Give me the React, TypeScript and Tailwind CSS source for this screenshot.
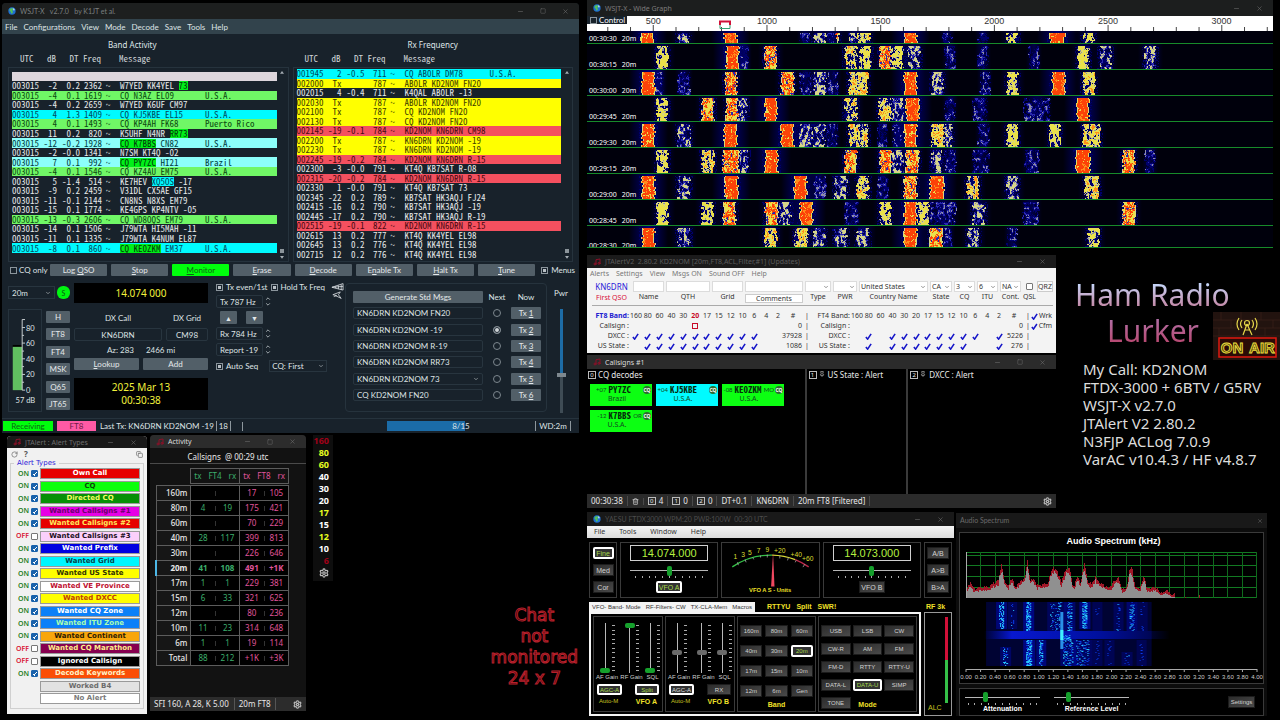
import React from 'react';
import { ChevronDown, Copy, Minus, Music, Pin, RotateCw, Settings, Square, Trash2, X } from 'lucide-react';
import { clsx } from 'clsx';

const UI = "font-['Noto_Sans',sans-serif]";
const QT = "font-['Lato',sans-serif]";
const MONO = "font-['Noto_Sans_Mono_CJK_SC','Liberation_Mono',monospace]";
const NARROW = "font-['Liberation_Sans_Narrow','Liberation_Sans',sans-serif]";

// small deterministic generator so the noise is stable between renders
function seeded(seed: number) {
  let s = seed;
  return () => {
    s = (s + 0x6d2b79f5) | 0;
    let t = Math.imul(s ^ (s >>> 15), 1 | s);
    t = (t + Math.imul(t ^ (t >>> 7), 61 | t)) ^ t;
    return ((t ^ (t >>> 14)) >>> 0) / 4294967296;
  };
}

/* ---------- shared bits ---------- */

interface TitleBarProps {
  title: string;
  icon: React.ReactNode;
  className?: string;
  maximize?: boolean;
}

const TitleBar: React.FC<TitleBarProps> = ({ title, icon, className, maximize = true }) => (
  <header className={clsx('flex items-center gap-1 px-1.5 text-[7px] leading-none', className)}>
    {icon}
    <h2 className="flex-1 whitespace-pre">{title}</h2>
    <div className="flex items-center gap-4 pr-1 text-[#6a6a6a]">
      <button aria-label="Minimize"><Minus size={7} /></button>
      {maximize && <button aria-label="Maximize"><Square size={6} /></button>}
      <button aria-label="Close"><X size={7} /></button>
    </div>
  </header>
);

const Globe = () => (
  <svg viewBox="0 0 12 12" className="size-[8px] shrink-0">
    <circle cx="6" cy="6" r="5.5" fill="#1f6fd0" />
    <path d="M3 2.5 6 1.5 8 3 6.5 5.5 7.5 8 5.5 10.5 4 7 2 5Z" fill="#53c05a" />
    <path d="M7 1.5 10 3.5 9 6 8 4Z" fill="#cfe9ff" />
  </svg>
);

const Note = () => <Music size={8} className="shrink-0 text-[#8c1028]" strokeWidth={3} />;

interface ComboProps {
  label: string;
  value: string;
  className?: string;
}

const Combo: React.FC<ComboProps> = ({ label, value, className }) => (
  <span className={clsx('flex items-center', className)}>
    <select aria-label={label} className="min-w-0 flex-1 appearance-none bg-transparent outline-none">
      <option>{value}</option>
    </select>
    <ChevronDown size={6} className="pointer-events-none shrink-0" />
  </span>
);

/* ---------- WSJT-X main window ---------- */

type Decode = [utc: string, db: string, dt: string, freq: string, msg: string, country?: string, row?: string, mark?: string];

const green = 'bg-[#70f766] text-[#0b4a10]';
const cyan = 'bg-[#00fbff] text-[#004a60]';
const pale = 'bg-[#8cfffa] text-[#003a40]';
const yellow = 'bg-[#ffff00] text-[#3d3d00]';
const red = 'bg-[#f4505f] text-[#4a0810]';
const lime = 'bg-[#00f018] text-[#003808]';

// the part of a message between bars is drawn on its own highlight
const band: Decode[] = [
  ['003015', '-2', '0.2', '2362', 'W7YED KK4YEL |73|', '', '', lime],
  ['003015', '-4', '0.1', '1619', 'CQ N3AZ EL09', 'U.S.A.', green],
  ['003015', '-4', '0.2', '2659', 'W7YED K6UF CM97'],
  ['003015', '4', '1.3', '1409', 'CQ KJ5KBE EL15', 'U.S.A.', cyan],
  ['003015', '4', '0.1', '1493', 'CQ KP4AH FK68', 'Puerto Rico', green],
  ['003015', '11', '0.2', '820', 'K5UHF N4NR |RR73|', '', '', lime],
  ['003015', '-12', '-0.2', '1928', '|CQ K7BBS| CN82', 'U.S.A.', pale, lime],
  ['003015', '-2', '-0.0', '1341', 'N7SM KT4Q -02'],
  ['003015', '7', '0.1', '992', '|CQ PY7ZC| HI21', 'Brazil', pale, lime],
  ['003015', '-4', '0.1', '1546', 'CQ KZ4AU EM75', 'U.S.A.', green],
  ['003015', '5', '-1.4', '514', 'KE7HEV |XQ5OS| -17', '', '', cyan],
  ['003015', '-9', '0.2', '2459', 'V31DL CX5AE GF15'],
  ['003015', '-11', '-0.1', '2144', 'CN8NS N8XS EM79'],
  ['003015', '-15', '0.1', '1774', 'KE4GPS KP4NTV -05'],
  ['003015', '-13', '-0.3', '2606', 'CQ WD8OQS EM79', 'U.S.A.', green],
  ['003015', '-14', '0.1', '1506', 'J79WTA HI5MAH -11'],
  ['003015', '-11', '0.1', '1335', 'J79WTA K4NUM EL87'],
  ['003015', '-8', '0.1', '860', '|CQ KE0ZKM| EM37', 'U.S.A.', cyan, lime],
];

const rx: Decode[] = [
  ['001945', '2', '-0.5', '711', 'CQ AB0LR DM78', 'U.S.A.', cyan],
  ['002000', 'Tx', '', '787', 'AB0LR KD2NOM FN20', '', yellow],
  ['002015', '4', '-0.4', '711', 'K4QAL AB0LR -13'],
  ['002030', 'Tx', '', '787', 'AB0LR KD2NOM FN20', '', yellow],
  ['002100', 'Tx', '', '787', 'CQ KD2NOM FN20', '', yellow],
  ['002130', 'Tx', '', '787', 'CQ KD2NOM FN20', '', yellow],
  ['002145', '-19', '-0.1', '784', 'KD2NOM KN6DRN CM98', '', red],
  ['002200', 'Tx', '', '787', 'KN6DRN KD2NOM -19', '', yellow],
  ['002230', 'Tx', '', '787', 'KN6DRN KD2NOM -19', '', yellow],
  ['002245', '-19', '-0.2', '784', 'KD2NOM KN6DRN R-15', '', red],
  ['002300', '-3', '-0.0', '791', 'KT4Q KB7SAT R-08'],
  ['002315', '-20', '-0.2', '784', 'KD2NOM KN6DRN R-15', '', red],
  ['002330', '1', '-0.0', '791', 'KT4Q KB7SAT 73'],
  ['002345', '-22', '0.2', '789', 'KB7SAT HK3AQJ FJ24'],
  ['002415', '-16', '0.2', '790', 'KB7SAT HK3AQJ -19'],
  ['002445', '-17', '0.2', '790', 'KB7SAT HK3AQJ R-19'],
  ['002515', '-19', '-0.1', '822', 'KD2NOM KN6DRN R-15', '', red],
  ['002615', '13', '0.2', '777', 'KT4Q KK4YEL EL98'],
  ['002645', '13', '0.2', '776', 'KT4Q KK4YEL EL98'],
  ['002715', '12', '0.2', '776', 'KT4Q KK4YEL EL98'],
];

interface DecodeTableProps {
  title: string;
  rows: Decode[];
  divider?: boolean;
}

const DecodeTable: React.FC<DecodeTableProps> = ({ title, rows, divider }) => (
  <section className="min-w-0 flex-1">
    <h3 className={clsx('text-center text-[8px] leading-[12px] text-[#dfe5e8]', UI, divider && 'pr-8')}>{title}</h3>
    <div className={clsx('flex h-[16px] items-center pl-[3px] text-[9px] whitespace-pre text-[#cfd5d8]', MONO)}>
      {'  UTC   dB   DT Freq    Message'}
    </div>
    <div className="flex h-[195px] border border-[#26333d] pt-px pl-[3px]">
      <div className={clsx('min-w-0 flex-1', divider && 'pt-[3px]')}>
        {divider && <div className="h-[9px] bg-[#ddd6dc]" />}
        <table className={clsx('w-full table-fixed border-collapse text-[9px] leading-[9px] font-medium text-[#e6e9ea]', MONO, divider ? 'h-[172px]' : 'h-[190px]')}>
          <colgroup>
            <col className="w-[27px]" />
            <col className="w-[18px]" />
            <col className="w-[23px]" />
            <col className="w-[22px]" />
            <col className="w-[18px]" />
            <col className="w-[85px]" />
            <col />
          </colgroup>
          <tbody>
            {rows.map(([utc, db, dt, freq, msg, country, row, mark], i) => {
              const [before, marked, after] = msg.split('|');
              return (
                <tr key={i} className={row}>
                  <td className="p-0">{utc}</td>
                  <td className="p-0 text-right">{db}</td>
                  <td className="p-0 text-right">{dt}</td>
                  <td className="p-0 text-right">{freq}</td>
                  <td className="p-0 pl-1">~</td>
                  <td className="p-0 whitespace-pre">
                    {before}
                    {marked && <span className={clsx('inline-block h-[9px]', mark)}>{marked}</span>}
                    {after}
                  </td>
                  <td className="p-0 whitespace-pre">{country}</td>
                </tr>
              );
            })}
          </tbody>
        </table>
      </div>
      <div className="flex w-[11px] flex-col items-center justify-between py-[2px] text-[#a5adb3]">
        <svg viewBox="0 0 6 4" className="w-[4px]"><path d="M0 4 3 0 6 4Z" fill="currentColor" /></svg>
        <div className="flex flex-col items-center gap-[3px]">
          <span className="size-[4px] bg-[#8b949a]" />
          <svg viewBox="0 0 6 4" className="w-[4px]"><path d="M0 0 3 4 6 0Z" fill="currentColor" /></svg>
        </div>
      </div>
    </div>
  </section>
);

const qtCheck =
  'size-[7px] shrink-0 appearance-none border border-[#8b959c] checked:bg-[#b9c0c5] checked:shadow-[inset_0_0_0_1px_#19232d]';
const qtButton = 'bg-[#525f68] text-[#e4e8ea] text-center rounded-[1px]';
const qtBox = 'rounded-[2px] border border-[#28353f] bg-transparent px-[3px] text-[#dfe3e5] outline-none';

interface KeyedProps {
  text: string;
}

// underlines the character that follows an ampersand
const Keyed: React.FC<KeyedProps> = ({ text }) => {
  const at = text.indexOf('&');
  if (at < 0) return <>{text}</>;
  return (
    <>
      {text.slice(0, at)}
      <u>{text[at + 1]}</u>
      {text.slice(at + 2)}
    </>
  );
};

const mainButtons = ['Log &QSO', '&Stop', '&Monitor', '&Erase', '&Decode', 'E&nable Tx', '&Halt Tx', '&Tune'];
const modes = ['H', 'FT8', 'FT4', 'MSK', 'Q65', 'JT65'];
const messages = ['KN6DRN KD2NOM FN20', 'KN6DRN KD2NOM -19', 'KN6DRN KD2NOM R-19', 'KN6DRN KD2NOM RR73', 'KN6DRN KD2NOM 73', 'CQ KD2NOM FN20'];

const LevelMeter = () => (
  <svg viewBox="0 0 34 103" className="h-[103px] w-[34px] shrink-0 border border-[#26333d]">
    <rect x="4" y="35" width="10" height="3" fill="#000" />
    <rect x="4" y="37" width="10" height="46" fill="#61c060" />
    <path d="M17 8H14V83H17M14 16.5H17M14 24.8H16M14 33H17M14 41.5H16M14 49.7H17M14 58H16M14 66.3H17M14 74.6H16" fill="none" stroke="#cfd5d8" />
    <g fill="#dfe3e5" fontSize="8" fontFamily="Lato">
      <text x="18" y="20">80</text>
      <text x="18" y="36">60</text>
      <text x="18" y="53">40</text>
      <text x="18" y="69">20</text>
      <text x="18" y="86">0</text>
      <text x="7" y="97">57 dB</text>
    </g>
  </svg>
);

const Horns = () => (
  <svg viewBox="0 0 14 18" className="h-[18px] w-[13px]" fill="none" stroke="#d5dadd" strokeWidth=".900">
    <path d="M1 5 13 1V8L1 5 13 4M5 4V6M8 3V7M11 2V8M10 10 2 13 6 14 3 15M10 10 8 13 11 17M5 14 11 17" />
  </svg>
);

const Spin = () => (
  <svg viewBox="0 0 6 12" className="ml-[2px] h-[11px] w-[6px] shrink-0" fill="none" stroke="#aab2b7">
    <path d="M1 4 3 2 5 4M1 8 3 10 5 8" />
  </svg>
);

const NumberField: React.FC<{ label: string; value: string }> = ({ label, value }) => (
  <div className="mt-[3px] flex h-[13px] items-center">
    <input aria-label={label} defaultValue={value} className={clsx(qtBox, 'h-[13px] w-[47px]')} />
    <Spin />
  </div>
);

const WsjtWindow = () => (
  <section className={clsx('mt-[3px] mr-1.5 ml-0.5 rounded-t bg-[#18222b] text-[8px] leading-[10px] text-[#dfe3e5]', QT)}>
    <TitleBar title="WSJT-X   v2.7.0   by K1JT et al." icon={<Globe />} className="h-[16px] rounded-t bg-[#1d1f1f] text-[#7b7f80]" />
    <nav className="flex h-[15px] items-center gap-[6px] bg-[#32434c] px-[3px]">
      {['File', 'Configurations', 'View', 'Mode', 'Decode', 'Save', 'Tools', 'Help'].map((m) => (
        <button key={m}>{m}</button>
      ))}
    </nav>

    <div className="flex gap-1 px-1.5 pt-[5px]">
      <DecodeTable title="Band Activity" rows={band} divider />
      <DecodeTable title="Rx Frequency" rows={rx} />
    </div>

    <div className="mt-[2px] flex items-center gap-1 pr-1 pl-2">
      <label className="flex w-[36px] items-center gap-[2px] whitespace-nowrap">
        <input type="checkbox" className={qtCheck} /> CQ only
      </label>
      {mainButtons.map((b) => (
        <button key={b} className={clsx(b === '&Monitor' ? 'rounded-[1px] bg-[#00ff0c] text-[#0d6614]' : qtButton, 'h-[12px] flex-1')}>
          <Keyed text={b} />
        </button>
      ))}
      <label className="ml-0.5 flex items-center gap-[3px]">
        <input type="checkbox" defaultChecked className={qtCheck} /> Menus
      </label>
    </div>

    <div className="flex h-[142px] gap-1 pt-[6px] pr-[3px] pl-1.5">
      <div className="flex w-[62px] shrink-0 flex-col gap-[10px] pt-[4px]">
        <div className="flex items-center gap-[2px]">
          <Combo label="Band" value="20m" className="h-[13px] w-[47px] border border-[#28353f] px-[3px]" />
          <button className="size-[13px] rounded-[6px] bg-[#00f510] text-[7px] text-[#0a5a10]">S</button>
        </div>
        <div className="flex gap-[4px]">
          <LevelMeter />
          <div className="flex flex-1 flex-col justify-between py-[2px]">
            {modes.map((m) => (
              <button key={m} className={clsx(qtButton, 'h-[12px] text-[#c6cdd2]')}>{m}</button>
            ))}
          </div>
        </div>
      </div>

      <div className="flex w-[134px] shrink-0 flex-col pt-px">
        <output className={clsx('h-[20px] bg-black text-center text-[10px] leading-[20px] text-[#f2f23c]', UI)}>14.074 000</output>
        <div className="mt-[10px] grid grid-cols-[88px_42px] gap-x-1 text-center">
          <label htmlFor="dxcall">DX Call</label>
          <label htmlFor="dxgrid">DX Grid</label>
          <input id="dxcall" defaultValue="KN6DRN" className={clsx(qtBox, 'mt-[5px] h-[13px] min-w-0 text-center')} />
          <input id="dxgrid" defaultValue="CM98" className={clsx(qtBox, 'mt-[5px] h-[13px] min-w-0 text-center')} />
        </div>
        <p className="mt-[4px] flex justify-center gap-3">
          <span>Az: 283</span>
          <span>2466 mi</span>
        </p>
        <div className="mt-[3px] grid grid-cols-2 gap-1">
          <button className={clsx(qtButton, 'h-[12px]')}><Keyed text="&Lookup" /></button>
          <button className={clsx(qtButton, 'h-[12px]')}>Add</button>
        </div>
        <div className={clsx('mt-[8px] h-[32px] bg-black pt-[3px] text-center text-[10px] leading-[13px] text-[#f2f23c]', UI)}>
          2025 Mar 13<br />00:30:38
        </div>
      </div>

      <div className="flex min-w-0 flex-1 flex-col pl-[4px]">
        <div className="flex items-start gap-1 whitespace-nowrap">
          <label className="flex items-center gap-[3px]"><input type="checkbox" defaultChecked className={qtCheck} />Tx even/1st</label>
          <label className="flex items-center gap-[2px]"><input type="checkbox" defaultChecked className={qtCheck} />Hold Tx Freq</label>
        </div>
        <NumberField label="Tx frequency" value="Tx 787 Hz" />
        <div className="mt-[3px] flex gap-[9px] pl-1 text-[7px]">
          <button className={clsx(qtButton, 'h-[13px] w-[17px]')}>▲</button>
          <button className={clsx(qtButton, 'h-[13px] w-[17px]')}>▼</button>
        </div>
        <NumberField label="Rx frequency" value="Rx 784 Hz" />
        <NumberField label="Report" value="Report -19" />
        <div className="mt-[4px] flex items-center gap-[11px] whitespace-nowrap">
          <label className="flex items-center gap-[3px]"><input type="checkbox" defaultChecked className={qtCheck} />Auto Seq</label>
          <Combo label="CQ" value="CQ: First" className="h-[12px] w-[60px] border border-[#28353f] px-[2px]" />
        </div>
      </div>
      <div className="-mr-[3px] w-[13px] shrink-0"><Horns /></div>

      <fieldset className="mt-px grid h-[129px] w-[202px] shrink-0 grid-cols-[130px_24px_30px] content-between items-center gap-x-[2px] rounded-sm border border-[#26333d] pt-[7px] pb-[10px] pl-[7px]">
        <button className={clsx(qtButton, 'h-[12px]')}>Generate Std Msgs</button>
        <span className="text-center">Next</span>
        <span className="text-center">Now</span>
        {messages.map((m, i) => (
          <React.Fragment key={m}>
            {i === 4 ? (
              <Combo label="Message 5" value={m} className={clsx(qtBox, 'h-[12px]')} />
            ) : (
              <input aria-label={'Message ' + (i + 1)} defaultValue={m} className={clsx(qtBox, 'h-[12px] min-w-0')} />
            )}
            <input
              type="radio"
              name="next"
              aria-label={'Next Tx ' + (i + 1)}
              defaultChecked={i === 1}
              className="mx-auto size-[8px] appearance-none rounded-full border border-[#7d878e] checked:bg-[#cfd5d8] checked:shadow-[inset_0_0_0_1px_#19232d]"
            />
            <button className={clsx(qtButton, 'h-[12px]')}>Tx <u>{i + 1}</u></button>
          </React.Fragment>
        ))}
      </fieldset>

      <label className="flex w-[20px] shrink-0 flex-col items-center gap-[11px] pt-[6px]">
        Pwr
        <input
          type="range"
          defaultValue={36}
          className="h-[104px] w-[9px] appearance-none bg-[linear-gradient(#1d6ca6_64%,#3f4c55_64%)] bg-[length:3px_100%] bg-center bg-no-repeat [direction:rtl] [writing-mode:vertical-lr] [&::-webkit-slider-thumb]:h-[4px] [&::-webkit-slider-thumb]:w-[9px] [&::-webkit-slider-thumb]:appearance-none [&::-webkit-slider-thumb]:bg-[#7e888f]"
        />
      </label>
      <span className="w-px shrink-0" />
    </div>

    <footer className="flex h-[15px] items-center border-t border-[#26333d] pr-2 pl-px">
      <span className="h-[10px] w-[50px] bg-[#00ff0c] text-center text-[#0d6614]">Receiving</span>
      <span className="ml-1 h-[10px] w-[39px] bg-[#ff5aa5] text-center text-[#6b1a44]">FT8</span>
      <span className="ml-1 border-r border-[#8d979d] pr-[2px] whitespace-nowrap">Last Tx: KN6DRN KD2NOM -19</span>
      <span className="w-[14px] border-r border-[#8d979d] text-center">18</span>
      <span className="h-[9px] w-[12px] border-r border-[#8d979d]" />
      <div className="flex-1" />
      <div className="h-[10px] w-[149px] border-r border-[#8d979d] bg-[linear-gradient(90deg,#1b6ca8_53%,#18222b_53%)] text-center">8/15</div>
      <span className="w-[35px] border-r border-[#8d979d] text-center">WD:2m</span>
    </footer>
  </section>
);

/* ---------- JTAlert: alert types ---------- */

const alerts: [string, string, boolean][] = [
  ['Own Call', 'bg-[#e60000] text-white', true],
  ['CQ', 'bg-[#0cff0c] text-[#0a4a0a]', true],
  ['Directed CQ', 'bg-[#069006] text-[#f4ff60]', true],
  ['Wanted Callsigns #1', 'bg-[#e600e6] text-[#6b006b]', true],
  ['Wanted Callsigns #2', 'bg-[#e60000] text-[#ffe95a]', true],
  ['Wanted Callsigns #3', 'bg-[#fbd0fb] text-[#1c101c]', false],
  ['Wanted Prefix', 'bg-[#0000e0] text-white', true],
  ['Wanted Grid', 'bg-[#00f6ff] text-[#06444a]', true],
  ['Wanted US State', 'bg-[#ffff00] text-[#333300]', true],
  ['Wanted VE Province', 'bg-white text-[#c01030]', true],
  ['Wanted DXCC', 'bg-[#ffff00] text-[#c04000]', true],
  ['Wanted CQ Zone', 'bg-[#0c80f8] text-white', true],
  ['Wanted ITU Zone', 'bg-[#0c80f8] text-[#a8ffb0]', true],
  ['Wanted Continent', 'bg-[#f8a60c] text-[#2e1c00]', true],
  ['Wanted CQ Marathon', 'bg-[#860050] text-[#fff08a]', false],
  ['Ignored Callsign', 'bg-black text-white', false],
  ['Decode Keywords', 'bg-[#fa4e06] text-[#fff3c8]', true],
];

// white tick for the small blue boxes
const tickMark =
  "checked:bg-[linear-gradient(45deg,transparent_30%,#fff_30%,#fff_45%,transparent_45%),linear-gradient(135deg,transparent_45%,#fff_45%,#fff_60%,transparent_60%)] checked:bg-[length:2px_3px,3px_3px] checked:bg-[position:1px_2px,2px_1px] checked:bg-no-repeat";

const AlertTypes = () => (
  <section className="mt-px w-[140px] shrink-0 rounded-t bg-[#f1f1f1]">
    <TitleBar title="JTAlert : Alert Types" icon={<Note />} maximize={false} className={clsx('h-[12px] rounded-t bg-[#191919] text-[#6d6d6d]', UI)} />
    <div className="flex h-[12px] items-center gap-1.5 px-1 text-[8px] text-[#555]">
      <RotateCw size={7} />
      <b className={clsx('flex-1', UI)}>?</b>
      <Copy size={7} />
    </div>
    <fieldset className="mx-[3px] border border-[#d0d0d0] px-[3px] pb-[4px] font-['DejaVu_Sans',sans-serif] text-[7px]">
      <legend className="px-[3px] leading-[7px] text-[#2c20d8]">Alert Types</legend>
      <div className="flex h-[237px] flex-col justify-between pt-px">
        {alerts.map(([name, colors, on]) => (
          <div key={name} className="flex items-center">
            <label className={clsx('flex w-[24px] items-center justify-end gap-[2px] text-[7px] leading-[10px] font-semibold', UI, on ? 'text-[#1e7d1e]' : 'text-[#d81030]')}>
              {on ? 'ON' : 'OFF'}
              <input type="checkbox" defaultChecked={on} className={clsx('size-[7px] shrink-0 appearance-none rounded-[1px] border border-[#777] bg-white checked:border-[#1a63ac] checked:bg-[#1a63ac]', tickMark)} />
            </label>
            <button className={clsx('ml-[2px] h-[11px] flex-1 border border-[#9a9a9a] text-center leading-[9px] font-bold', colors)}>{name}</button>
          </div>
        ))}
        <div className="ml-[26px] h-[11px] border border-[#9a9a9a] bg-[#e2e2e2] text-center leading-[9px] font-bold text-[#6b6b6b]">Worked B4</div>
        <div className="ml-[26px] h-[11px] border border-[#9a9a9a] bg-white text-center leading-[9px] font-bold text-[#7a7a7a]">No Alert</div>
      </div>
    </fieldset>
  </section>
);

/* ---------- Activity ---------- */

const activity: [string, string, string, string, string][] = [
  ['160m', '', '', '17', '105'],
  ['80m', '4', '19', '175', '421'],
  ['60m', '', '', '70', '229'],
  ['40m', '28', '117', '399', '813'],
  ['30m', '', '', '226', '646'],
  ['20m', '41', '108', '491', '+1K'],
  ['17m', '1', '1', '229', '381'],
  ['15m', '6', '33', '321', '625'],
  ['12m', '', '', '80', '236'],
  ['10m', '11', '23', '314', '648'],
  ['6m', '1', '1', '19', '114'],
  ['Total', '88', '212', '+1K', '+3K'],
];

const Pair: React.FC<{ a: string; b: string }> = ({ a, b }) => (
  <div className="grid grid-cols-[1fr_1px_1fr] items-center">
    <span>{a}</span>
    <span className="h-[5px] bg-[#333]" />
    <span>{b}</span>
  </div>
);

const Activity = () => (
  <section className={clsx('flex w-[156px] shrink-0 flex-col rounded-t bg-[#121212] text-[8px] text-[#e8e8e8]', UI)}>
    <TitleBar title="Activity" icon={<Note />} className="h-[13px] rounded-t bg-[#2c2c2c] text-[#dcdcdc]" />
    <h3 className="h-[16px] border-b border-[#4a4a4a] pt-px text-center text-[8px] leading-[16px] whitespace-pre">Callsigns  @ 00:29 utc</h3>
    <table className="mt-[4px] mr-[17px] ml-[5px] border-collapse text-center leading-[10px]">
      <thead>
        <tr className="h-[15px] font-normal">
          <td className="w-[35px]" />
          <th className="border border-[#5c5c5c] p-0 font-normal text-[#3cae6c]"><div className="flex justify-between px-[3px]"><span>tx</span><span>FT4</span><span>rx</span></div></th>
          <th className="border border-[#5c5c5c] p-0 font-normal text-[#e0559c]"><div className="flex justify-between px-[3px]"><span>tx</span><span>FT8</span><span>rx</span></div></th>
        </tr>
        <tr className="h-[2px]" />
      </thead>
      <tbody className="bg-black">
        {activity.map(([name, a, b, c, d]) => (
          <tr key={name} className={clsx('h-[15px]', name === '20m' && 'font-bold')}>
            <th className={clsx('border border-[#5c5c5c] bg-[#161616] p-0 pr-[3px] text-right', name === '20m' ? 'border-l-2 border-l-[#4db8e8] font-bold' : 'font-medium')}>{name}</th>
            <td className="w-[49px] border border-[#5c5c5c] p-0 text-[#3cae6c]"><Pair a={a} b={b} /></td>
            <td className="w-[49px] border border-[#5c5c5c] p-0 text-[#e0559c]"><Pair a={c} b={d} /></td>
          </tr>
        ))}
      </tbody>
    </table>
    <footer className="mt-auto flex h-[14px] items-center gap-[5px] bg-[#2c2c2c] px-1">
      <span>SFI 160, A 28, K 5.00</span>
      <span className="border-x border-[#555] px-[4px]">20m FT8</span>
      <button aria-label="Settings" className="ml-auto"><Settings size={9} strokeWidth={3} className="text-[#bbb]" /></button>
    </footer>
  </section>
);

const bandList: [string, string][] = [
  ['160', 'text-[#a00018]'],
  ['80', 'text-[#e8ff20]'],
  ['60', 'text-[#e8ff20]'],
  ['40', 'text-white'],
  ['30', 'text-white'],
  ['20', 'text-white'],
  ['17', 'text-[#e8ff20]'],
  ['15', 'text-white'],
  ['12', 'text-[#e8ff20]'],
  ['10', 'text-white'],
  ['6', 'text-[#a00018]'],
];

/* ---------- Wide graph ---------- */

type Signal = [x: number, kind: 'R' | 'O' | 'Y' | 'W' | 'B', width?: number];

const slots: { top: number; height: number; time: string; signals: Signal[] }[] = [
  { top: 0, height: 13, time: '00:30:30', signals: [[54, 'R'], [91, 'W', 11], [137, 'R'], [213, 'B', 10], [227, 'W', 12], [241, 'B', 6], [249, 'O', 3], [263, 'W', 7], [270, 'Y'], [317, 'R'], [355, 'B', 10], [391, 'B', 10], [420, 'Y', 11], [463, 'R', 15], [496, 'Y', 11]] },
  { top: 13, height: 26, time: '00:30:15', signals: [[70, 'Y', 11], [139, 'R'], [153, 'B', 8], [178, 'O', 12], [258, 'Y', 12], [273, 'Y', 11], [293, 'O', 11], [305, 'Y', 11], [321, 'W', 12], [358, 'B', 10], [391, 'B', 10], [442, 'B', 10], [491, 'Y', 11], [513, 'W', 11], [558, 'W', 11]] },
  { top: 39, height: 26, time: '00:30:00', signals: [[55, 'R'], [67, 'B', 9], [91, 'B', 12], [138, 'O', 12], [194, 'O'], [213, 'B', 11], [227, 'W', 12], [241, 'B', 11], [262, 'Y', 19], [317, 'R'], [345, 'W', 11], [393, 'B', 10], [420, 'Y', 11], [465, 'R'], [496, 'Y', 12]] },
  { top: 65, height: 26, time: '00:29:45', signals: [[70, 'Y', 11], [115, 'O', 12], [139, 'O', 12], [152, 'W', 8], [178, 'R', 12], [258, 'Y', 12], [292, 'Y', 12], [305, 'W', 11], [319, 'R'], [358, 'B', 10], [386, 'B', 14], [437, 'B', 26], [490, 'R', 12]] },
  { top: 91, height: 26, time: '00:29:30', signals: [[55, 'R'], [91, 'W', 12], [137, 'R'], [194, 'R'], [213, 'W', 12], [227, 'W', 11], [241, 'B', 10], [262, 'Y', 19], [291, 'B', 9], [306, 'B', 9], [317, 'R'], [345, 'Y', 12], [358, 'W', 7], [391, 'B', 11], [420, 'Y', 11], [463, 'Y', 10], [496, 'Y', 17]] },
  { top: 117, height: 26, time: '00:29:15', signals: [[70, 'Y', 11], [115, 'Y', 12], [136, 'O', 16], [153, 'W', 8], [178, 'R'], [258, 'O', 12], [293, 'O', 12], [305, 'W', 11], [319, 'O'], [345, 'W', 10], [358, 'B', 11], [386, 'B', 16], [438, 'B', 14], [489, 'R', 14], [536, 'O', 12], [558, 'B', 10]] },
  { top: 143, height: 26, time: '00:29:00', signals: [[55, 'R'], [91, 'W', 12], [138, 'R'], [207, 'R'], [227, 'B', 12], [248, 'W', 12], [270, 'Y', 12], [290, 'B', 11], [317, 'O'], [343, 'R', 14], [380, 'Y', 12], [420, 'W', 11], [498, 'Y', 14]] },
  { top: 169, height: 26, time: '00:28:45', signals: [[70, 'Y', 11], [115, 'Y', 11], [136, 'O'], [178, 'O'], [193, 'W', 11], [213, 'R'], [258, 'B', 14], [293, 'Y', 11], [317, 'R'], [331, 'Y', 11], [343, 'B', 26], [386, 'W', 12], [436, 'B', 16], [536, 'O', 12]] },
  { top: 195, height: 22, time: '00:28:30', signals: [[55, 'R'], [91, 'W', 12], [178, 'Y', 12], [208, 'Y'], [227, 'W', 11], [248, 'W', 12], [270, 'W', 12], [317, 'R'], [343, 'O'], [357, 'B', 8], [381, 'W', 11], [420, 'B', 10], [501, 'Y', 11]] },
];

function buildWaterfall() {
  const rand = seeded(7);
  const lattice: number[] = Array.from({ length: 400 * 100 }, () => rand());
  // bilinear value noise, slightly taller than wide
  const noise = (x: number, y: number) => {
    const u = x / 1.8;
    const v = y / 2.6;
    const i = Math.floor(u);
    const j = Math.floor(v);
    const fx = u - i;
    const fy = v - j;
    const at = (a: number, b: number) => lattice[b * 400 + a];
    return (at(i, j) * (1 - fx) + at(i + 1, j) * fx) * (1 - fy) + (at(i, j + 1) * (1 - fx) + at(i + 1, j + 1) * fx) * fy;
  };
  const paths: Record<string, string> = { '#00006a': '', '#2a28b0': '', '#8c8ca8': '', '#d6d488': '', '#eae04a': '', '#ff8c1c': '', '#fc4208': '' };
  const dot = (color: string, x: number, y: number) => {
    paths[color] += `M${x} ${y}h1v1h-1z`;
  };
  for (const { top, height, signals } of slots) {
    for (const [x0, kind, width = 13] of signals) {
      let wobbleL = 0;
      let wobbleR = 0;
      for (let y = top + 2; y < top + Math.min(height - 1, 25); y++) {
        if (y % 2 === 0) {
          wobbleL = Math.floor(rand() * 2.6) - 1;
          wobbleR = Math.floor(rand() * 2.6) - 1;
        }
        const left = x0 + wobbleL;
        const right = x0 + width + wobbleR;
        for (let x = x0 - 3; x < x0 + width + 3; x++) {
          const v = noise(x, y) * 0.75 + rand() * 0.25;
          const inside = x >= left && x < right;
          const edge = x <= left || x >= right - 1;
          if (!inside) {
            if (rand() < 0.3 && kind !== 'B') dot('#00006a', x, y);
          } else if (kind === 'R') {
            dot(edge ? (v > 0.5 ? '#eae04a' : '#d6d488') : v > 0.68 ? '#ff8c1c' : v < 0.25 ? '#eae04a' : '#fc4208', x, y);
          } else if (kind === 'O') {
            dot(edge && v > 0.4 ? '#d6d488' : v > 0.6 ? '#eae04a' : v > 0.54 ? '#ff8c1c' : v > 0.34 ? '#fc4208' : v > 0.26 ? '#eae04a' : '#2a28b0', x, y);
          } else if (kind === 'Y') {
            dot(v > 0.7 && width > 11 ? '#ff8c1c' : v > 0.48 ? '#eae04a' : v > 0.42 ? '#d6d488' : v > 0.37 ? '#8c8ca8' : '#00006a', x, y);
          } else if (kind === 'W') {
            if (v > 0.6) dot('#d6d488', x, y);
            else if (v > 0.54) dot('#8c8ca8', x, y);
            else if (v > 0.44) dot('#2a28b0', x, y);
            else if (v > 0.3) dot('#00006a', x, y);
          } else {
            if (v > 0.74) dot('#8c8ca8', x, y);
            else if (v > 0.62) dot('#2a28b0', x, y);
            else if (v > 0.4) dot('#00006a', x, y);
          }
        }
      }
    }
  }
  return paths;
}

const waterfall = buildWaterfall();

const Waterfall = () => (
  <svg viewBox="0 0 686 217" preserveAspectRatio="none" className="absolute inset-0 size-full">
    <defs>
      <linearGradient id="halo">
        <stop offset="0" stopColor="#0000a0" stopOpacity="0" />
        <stop offset=".5" stopColor="#0000a0" stopOpacity=".7" />
        <stop offset="1" stopColor="#0000a0" stopOpacity="0" />
      </linearGradient>
    </defs>
    {slots.map(({ top, height, signals }) =>
      signals.map(([x, kind, w = 13]) => {
        const spread = kind === 'R' ? 13 : kind === 'B' ? 3 : 7;
        return <rect key={top + ':' + x} x={x - spread} y={top} width={w + spread * 2} height={height} fill="url(#halo)" opacity={kind === 'R' ? 1 : 0.6} />;
      }),
    )}
    {Object.entries(waterfall).map(([color, d]) => (
      <path key={color} d={d} fill={color} />
    ))}
  </svg>
);

const FrequencyScale = () => (
  <svg className="block h-[15px] w-full bg-white" fontFamily="Liberation Sans" fontSize="9" fill="#333">
    {Array.from({ length: 30 }).map((_, i) => {
      const x = 3.03 + i * 3.315 + '%';
      return <line key={i} x1={x} x2={x} y1={i % 5 === 2 ? 9 : 11} y2="15" stroke="#444" />;
    })}
    {[500, 1000, 1500, 2000, 2500, 3000].map((f, i) => (
      <text key={f} x={9.66 + i * 16.57 + '%'} y="8" textAnchor="middle">{f}</text>
    ))}
    <path d="M133 9V5.500H143V9" fill="none" stroke="#d01038" strokeWidth="2" />
    <path d="M133 9V12.500H143V9" fill="none" stroke="#30a070" />
  </svg>
);

const WideGraph = () => (
  <section className={clsx('mr-[7px] ml-0.5 text-[7px] text-white', UI)}>
    <TitleBar title="WSJT-X - Wide Graph" icon={<Globe />} maximize={false} className="h-[16px] bg-[#1c1e1e] text-[#7c7c7c]" />
    <div className="relative">
      <FrequencyScale />
      <label className={clsx('absolute top-0 left-0 flex h-[8px] w-[40px] items-center gap-[2px] overflow-hidden bg-[#18222b] pl-[3px] text-[8px] leading-[8px]', QT)}>
        <input type="checkbox" className={qtCheck} />
        Control
      </label>
    </div>
    <div className="relative overflow-hidden bg-[#00000c]">
      <Waterfall />
      {slots.map(({ time, height }, i) => (
        <div
          key={time}
          className={clsx('relative flex gap-[5px] overflow-hidden border-b border-[#178a2a] pl-[2px] leading-[9px]', i === 8 ? 'items-start pt-[15px]' : 'items-end')}
          style={{ height }}
        >
          <span>{time}</span>
          <span>20m</span>
        </div>
      ))}
    </div>
  </section>
);

/* ---------- JTAlert main ---------- */

const bands = ['160', '80', '60', '40', '30', '20', '17', '15', '12', '10', '6', '4', '2'];

interface BandTableProps {
  mode: string;
  dxcc: string[];
  states: string[];
  totals: [string, string];
  current?: string;
}

const Tick = () => (
  <svg viewBox="0 0 8 8" className="mx-auto size-[7px]"><path d="M1 4.500 3 7 7 1" fill="none" stroke="#1616c8" strokeWidth="1.800" /></svg>
);

const BandTable: React.FC<BandTableProps> = ({ mode, dxcc, states, totals, current }) => (
  <table className="w-full min-w-0 flex-1 table-fixed border-collapse text-center text-[7px] leading-[10px] text-[#333]">
    <colgroup>
      <col className="w-[39px]" />
      {bands.map((b) => <col key={b} />)}
      <col className="w-[18px]" />
    </colgroup>
    <tbody>
      <tr>
        <th className={clsx('p-0 pr-px text-right whitespace-nowrap', current ? 'font-bold text-[#2020d0]' : 'font-normal')}>{mode} Band:</th>
        {bands.map((b) => (
          <td key={b} className={clsx('p-0', b === current && 'font-bold text-[#c80a28]')}>{b}</td>
        ))}
        <td className="p-0">#</td>
      </tr>
      <tr>
        <th className="p-0 pr-px text-right font-normal">Callsign :</th>
        {bands.map((b) => (
          <td key={b} className="p-0">{b === current && <span className="mx-auto block size-[6px] border border-[#c80a28]" />}</td>
        ))}
        <td className="p-0 text-right">0</td>
      </tr>
      <tr>
        <th className="p-0 pr-px text-right font-normal">DXCC :</th>
        {bands.map((b) => <td key={b} className="p-0">{dxcc.includes(b) && <Tick />}</td>)}
        <td className="p-0"><div className="flex justify-end">{totals[0]}</div></td>
      </tr>
      <tr>
        <th className="p-0 pr-px text-right font-normal whitespace-nowrap">US State :</th>
        {bands.map((b) => <td key={b} className="p-0">{states.includes(b) && <Tick />}</td>)}
        <td className="p-0 text-right">{totals[1]}</td>
      </tr>
    </tbody>
  </table>
);

const jtBox = 'h-[11px] min-w-0 border border-[#dcdcdc] bg-white px-px outline-none';

const JtAlert = () => (
  <section className={clsx('h-[98px] bg-[#f3f3f3] text-[7px] leading-[9px] text-[#333]', UI)}>
    <TitleBar title="JTAlertV2  2.80.2 KD2NOM [20m,FT8,ACL,Filter,#1] (Updates)" icon={<Note />} maximize={false} className="h-[13px] bg-[#1b1b1b] text-[#5c5c5c]" />
    <nav className="flex h-[10px] items-center gap-[7px] px-[3px] text-[#777]">
      {['Alerts', 'Settings', 'View', 'Msgs ON', 'Sound OFF', 'Help'].map((m) => <button key={m}>{m}</button>)}
    </nav>
    <div className="mt-[3px] mr-[3px] ml-[5px] grid grid-cols-[39px_31px_44px_31px_58px_26px_24px_69px_22px_21px_21px_21px_12px_1fr] gap-x-[2px] border-b border-[#aaa] pb-[2px] text-center">
      <span className="text-[8px] leading-[11px] text-[#2a20d8]">KN6DRN</span>
      <input id="jt-name" className={jtBox} />
      <input id="jt-qth" className={jtBox} />
      <input id="jt-grid" className={jtBox} />
      <input aria-label="Comments" className={jtBox} />
      <Combo label="Type" value="" className={jtBox} />
      <Combo label="PWR" value="" className={jtBox} />
      <Combo label="Country Name" value="United States" className={jtBox} />
      <Combo label="State" value="CA" className={jtBox} />
      <Combo label="CQ zone" value="3" className={jtBox} />
      <Combo label="ITU zone" value="6" className={jtBox} />
      <Combo label="Continent" value="NA" className={jtBox} />
      <input id="jt-qsl" type="checkbox" className="mx-auto mt-[2px] size-[7px] appearance-none rounded-[1px] border border-[#777] bg-white" />
      <button className="h-[11px] border border-[#ccc] bg-[#fafafa]">QRZ</button>
      <span className="leading-[11px] whitespace-nowrap text-[#d81038]">First QSO</span>
      <label htmlFor="jt-name">Name</label>
      <label htmlFor="jt-qth">QTH</label>
      <label htmlFor="jt-grid">Grid</label>
      <button className="mt-[2px] h-[9px] border border-[#ccc] bg-white leading-[7px]">Comments</button>
      <span>Type</span>
      <span>PWR</span>
      <span>Country Name</span>
      <span>State</span>
      <span>CQ</span>
      <span>ITU</span>
      <span>Cont.</span>
      <label htmlFor="jt-qsl">QSL</label>
    </div>
    <div className="mt-[5px] flex gap-[3px] px-1">
      <BandTable mode="FT8" current="20" dxcc={bands.slice(0, 11)} states={bands.slice(1, 11)} totals={['37928', '1086']} />
      <div className="leading-[10px]">|<br />|<br />|<br />|</div>
      <BandTable mode="FT4" dxcc={['80', '40', '30', '20', '17', '15', '12', '10', '6', '2']} states={['80', '40', '30', '20', '17', '15', '12', '10', '2']} totals={['5226', '276']} />
      <div className="w-[26px] shrink-0 leading-[10px]">
        <p className="flex items-center gap-px">|<Tick />Wrk</p>
        <p className="flex items-center gap-px">|<Tick />Cfm</p>
        <p>|</p>
        <p>|</p>
      </div>
    </div>
  </section>
);

/* ---------- Callsigns ---------- */

const cards = [
  { snr: '+07', call: 'PY7ZC', where: 'Brazil', state: '', color: 'bg-[#0cff12]' },
  { snr: '+04', call: 'KJ5KBE', where: 'U.S.A.', state: '', color: 'bg-[#00fbff]' },
  { snr: '-08', call: 'KE0ZKM', where: 'U.S.A.', state: 'MO', color: 'bg-[#0cff12]' },
  { snr: '-12', call: 'K7BBS', where: 'U.S.A.', state: 'OR', color: 'bg-[#0cff12]' },
];

const Box: React.FC<{ n: string }> = ({ n }) => (
  <span className="inline-flex size-[8px] items-center justify-center border border-[#bbb] text-[6px] leading-none">{n}</span>
);

const Callsigns = () => (
  <section className={clsx('mt-[2px] flex h-[153px] flex-col bg-black text-[8px] leading-[10px] text-[#e8e8e8]', UI)}>
    <TitleBar title="Callsigns #1" icon={<Note />} className="h-[14px] bg-[#2b2b2b] text-[#dcdcdc]" />
    <div className="grid flex-1 grid-cols-[220fr_102fr_148fr]">
      <div className="border-r-2 border-[#3a3a3a] px-px">
        <h3 className="mt-px flex items-center gap-[2px]"><Box n="0" /> CQ decodes</h3>
        <div className="mt-[4px] flex flex-wrap gap-1 pl-0.5">
          {cards.map((c) => (
            <article key={c.call} className={clsx('flex h-[22px] w-[62px] flex-col text-center text-[7px] leading-[9px] text-[#124a20]', c.color)}>
              <p className="flex items-center justify-end gap-px pt-px pr-px whitespace-nowrap">
                <span className={clsx('text-[6px]', QT)}>{c.snr}</span>
                <b className={clsx('px-px text-[9px] text-[#062a0c]', MONO)}>{c.call}</b>
                <span className={clsx('min-w-[9px] text-[6px]', QT)}>{c.state}</span>
                <span className="size-[8px] rounded-full bg-[#2f6a2f] text-[5px] leading-[8px] font-bold text-white">CQ</span>
              </p>
              <p className="pr-2">{c.where}</p>
            </article>
          ))}
        </div>
      </div>
      <h3 className="flex items-start gap-[3px] border-r-2 border-[#3a3a3a] px-0.5 pt-px whitespace-nowrap"><span className="mt-px flex gap-[2px]"><Box n="1" /><Pin size={6} /></span>US State : Alert</h3>
      <h3 className="flex items-start gap-[3px] px-0.5 pt-px whitespace-nowrap"><span className="mt-px flex gap-[2px]"><Box n="2" /><Pin size={6} /></span>DXCC : Alert</h3>
    </div>
    <footer className="flex h-[14px] items-center bg-[#2b2b2b] px-1 [&>span]:border-r [&>span]:border-[#4a4a4a] [&>span]:px-[4px]">
      <span className="-ml-1">00:30:38</span>
      <span><Trash2 size={7} /></span>
      <span className="flex items-center gap-[3px]"><Box n="0" />4</span>
      <span className="flex items-center gap-[3px]"><Box n="1" />0</span>
      <span className="flex items-center gap-[3px]"><Box n="2" />0</span>
      <span>DT+0.1</span>
      <span>KN6DRN</span>
      <span>20m FT8 [Filtered]</span>
      <button aria-label="Settings" className="ml-auto"><Settings size={9} strokeWidth={3} className="text-[#bbb]" /></button>
    </footer>
  </section>
);

/* ---------- Branding ---------- */

const OnAir = () => (
  <svg viewBox="0 0 67 48" className="mt-px h-[48px] w-[67px] shrink-0">
    <rect width="67" height="48" fill="#22130f" />
    <path d="M0 8H67M0 16H67M0 24H67M8 0V8M28 0V8M48 0V8M18 8V16M40 8V16M60 8V16M6 16V24M52 16V24" stroke="#3a211a" strokeWidth=".7" />
    <g fill="none" stroke="#e6d84a" strokeWidth="1.200">
      <path d="M34 12 30 23M34 12 39 23M32 18H37M29 8Q26 12 29 16M39 8Q42 12 39 16M26 6Q22 12 26 18M42 6Q46 12 42 18" />
      <circle cx="34" cy="11" r="2.500" />
    </g>
    <rect x="6" y="26" width="57" height="19" fill="#2a0b06" stroke="#e01a10" strokeWidth="1.500" />
    <g textAnchor="middle" fontFamily="Liberation Sans Narrow, Liberation Sans" fontWeight="700" fontSize="15" fill="#4a3a08" stroke="#f0e040" strokeWidth=".9">
      <text x="19" y="41">ON</text>
      <text x="49" y="41">AIR</text>
    </g>
  </svg>
);

const stack = ['My Call: KD2NOM', 'FTDX-3000 + 6BTV / G5RV', 'WSJT-X v2.7.0', 'JTAlert V2 2.80.2', 'N3FJP ACLog 7.0.9', 'VarAC v10.4.3 / HF v4.8.7'];

const Branding = () => (
  <aside className={clsx('w-[224px] shrink-0 pt-[20px] pl-[19px] text-[#dcdcdc]', UI)}>
    <h1 className="text-[30px] leading-[40px] whitespace-nowrap">
      <span className="bg-linear-to-b from-[#c4d4f8] from-25% to-[#c07a98] to-90% bg-clip-text text-transparent">Ham Radio</span>
    </h1>
    <div className="-mt-[4px] flex items-start">
      <p className="flex-1 pl-[32px] text-[30px] leading-[40px]">
        <span className="bg-linear-to-b from-[#b070a8] from-20% to-[#b84068] to-90% bg-clip-text text-transparent">Lurker</span>
      </p>
      <OnAir />
    </div>
    <ul className="pl-[8px] text-[15px] leading-[18px] whitespace-nowrap">
      {stack.map((s) => <li key={s}>{s}</li>)}
    </ul>
  </aside>
);

/* ---------- FTDX3000 control ---------- */

const rig = 'border border-[#1c1c1c] bg-linear-to-br from-[#2c2c2c] to-[#4a4a4a] text-[#d2d2d2] leading-none whitespace-nowrap';
const rigOn = 'border-2 border-white bg-[#333] leading-none rounded-[2px] whitespace-nowrap';
const panel = 'border border-[#3a3a3a]';
const hRange =
  'h-[11px] w-full appearance-none bg-[linear-gradient(#b8b8b8,#b8b8b8)] bg-[length:100%_1px] bg-center bg-no-repeat [&::-webkit-slider-thumb]:h-[10px] [&::-webkit-slider-thumb]:w-[5px] [&::-webkit-slider-thumb]:appearance-none [&::-webkit-slider-thumb]:rounded-[2px] [&::-webkit-slider-thumb]:bg-[#15a02c]';
const vRange =
  'h-[50px] w-[11px] appearance-none [writing-mode:vertical-lr] [direction:rtl] bg-[linear-gradient(#b8b8b8,#b8b8b8)] bg-[length:1px_100%] bg-center bg-no-repeat [&::-webkit-slider-thumb]:h-[5px] [&::-webkit-slider-thumb]:w-[10px] [&::-webkit-slider-thumb]:appearance-none [&::-webkit-slider-thumb]:rounded-[2px]';

const Ticks: React.FC<{ className?: string }> = ({ className }) => (
  <div className={clsx('flex justify-between', className)}>
    {Array.from({ length: 11 }).map((_, i) => <span key={i} className="h-[2px] w-px bg-[#aaa]" />)}
  </div>
);

const Vfo: React.FC<{ name: string; freq: string; active?: boolean }> = ({ name, freq, active }) => (
  <div className={clsx(panel, 'flex min-w-0 flex-col items-center px-[9px] pt-[2px]')}>
    <output className="h-[16px] w-full border border-[#d0d0d0] text-center font-['Liberation_Sans',sans-serif] text-[11px] leading-[14px] text-[#b4f040]">{freq}</output>
    <input type="range" aria-label={name + ' tuning'} className={clsx(hRange, 'mt-[4px]')} />
    <Ticks className="w-[68px]" />
    <button className={clsx(active ? rigOn + ' text-[#a6d84a]' : rig, 'mt-[3px] h-[12px] w-[26px] shrink-0')}>{name}</button>
  </div>
);

const SMeter = () => (
  <svg viewBox="0 0 100 56" className="h-[56px] w-full border border-[#3a3a3a]">
    <g fill="none" strokeWidth="1.400">
      <path d="M10.700 24.700A71 71 0 0 1 52 12.500" stroke="#35c048" />
      <path d="M52 12.500A71 71 0 0 1 76 17.200" stroke="#d8d838" />
      <path d="M76 17.200A71 71 0 0 1 90 24.700" stroke="#c02848" />
      <path d="M17 23 16 20M25 20 24 17M33 17 32 15M40 15V13M47 15V12M60 16V13M68 18 69 15M76 20 77 18M84 25 86 22" stroke="#aaa" strokeWidth=".800" />
    </g>
    <path d="M51 45 53 10 54.500 45Z" fill="#f04860" />
    <g fill="#dede30" fontSize="7" fontFamily="Liberation Sans Narrow, Liberation Sans" textAnchor="middle">
      <text x="14" y="17">1</text>
      <text x="22" y="14">3</text>
      <text x="29" y="12">5</text>
      <text x="38" y="10">7</text>
      <text x="47" y="9">9</text>
      <text x="60" y="10">+20</text>
      <text x="77" y="14">+40</text>
      <text x="89" y="19">+60</text>
      <text x="50" y="51" fontFamily="Liberation Sans" fontSize="6" fontWeight="700" fill="#f0e028">VFO A S - Units</text>
    </g>
  </svg>
);

interface GainProps {
  vfo: string;
  levels: number[];
  active?: boolean;
  second: string;
}

const Gains: React.FC<GainProps> = ({ vfo, levels, active, second }) => (
  <div className={clsx(panel, 'flex w-[70px] shrink-0 flex-col px-[2px] pt-[6px]')}>
    <div className="flex justify-between">
      {['AF Gain', 'RF Gain', 'SQL'].map((g, i) => (
        <label key={g} className="flex flex-col items-center text-[6px] leading-[9px] whitespace-nowrap text-[#d0d0d0]">
          <span className="flex gap-px">
            <input type="range" defaultValue={levels[i]} className={clsx(vRange, active ? '[&::-webkit-slider-thumb]:bg-[#15a02c]' : '[&::-webkit-slider-thumb]:bg-[#6a6a6a]')} />
            <span className="flex flex-col justify-between py-[2px]">
              {Array.from({ length: 11 }).map((_, k) => <span key={k} className="h-px w-[3px] bg-[#aaa]" />)}
            </span>
          </span>
          {g}
        </label>
      ))}
    </div>
    <div className="mt-[2px] flex justify-between px-px text-[6px]">
      <button className={clsx(rigOn, 'h-[11px] w-[25px]', active ? 'text-[#a6d84a]' : 'text-[#ddd]')}>AGC-A</button>
      <button className={clsx(active ? rigOn + ' text-[#a6d84a]' : rig, 'h-[11px] w-[24px]')}>{second}</button>
    </div>
    <div className="mt-[2px] flex justify-between px-[3px] text-[6px] whitespace-nowrap text-[#c8c020]">
      <span>Auto-M</span>
      <b className="text-[7px] text-[#f0e028]">{vfo}</b>
    </div>
  </div>
);

const bandKeys = ['160m', '80m', '60m', '40m', '30m', '20m', '17m', '15m', '10m', '12m', '6m', 'Gen'];
const modeKeys = ['USB', 'LSB', 'CW', 'CW-R', 'AM', 'FM', 'FM-D', 'RTTY', 'RTTY-U', 'DATA-L', 'DATA-U', 'SIMP', 'TONE'];

const RigControl = () => (
  <section className={clsx('flex w-[367px] shrink-0 flex-col bg-black text-[7px] text-[#ccc]', NARROW)}>
    <TitleBar title="YAESU FTDX3000 WPM:20 PWR:100W  00:30 UTC" icon={<Globe />} maximize={false} className={clsx('h-[14px] bg-[#191919] text-[#4c4c4c]', QT)} />
    <nav className={clsx('flex h-[12px] items-center gap-[14px] bg-linear-to-b from-[#f4f4f4] to-[#dcdcdc] px-[7px] text-[#333]', UI)}>
      {['File', 'Tools', 'Window', 'Help'].map((m) => <button key={m}>{m}</button>)}
    </nav>
    <div className="mt-[4px] grid h-[56px] grid-cols-[28px_1fr_1fr_1fr_28px] gap-[3px] px-0.5">
      <div className={clsx(panel, 'flex flex-col items-center justify-between py-[4px]')}>
        <button className={clsx(rigOn, 'h-[12px] w-[21px] text-[#a6d84a]')}>Fine</button>
        <button className={clsx(rig, 'h-[12px] w-[21px]')}>Med</button>
        <button className={clsx(rig, 'h-[12px] w-[21px]')}>Cor</button>
      </div>
      <Vfo name="VFO A" freq="14.074.000" active />
      <SMeter />
      <Vfo name="VFO B" freq="14.073.000" />
      <div className={clsx(panel, 'flex flex-col items-center justify-between py-[4px]')}>
        <button className={clsx(rig, 'h-[12px] w-[22px]')}>A/B</button>
        <button className={clsx(rig, 'h-[12px] w-[22px]')}>A&gt;B</button>
        <button className={clsx(rig, 'h-[12px] w-[22px]')}>B&gt;A</button>
      </div>
    </div>
    <div className="mt-[4px] flex h-[10px] items-center px-0.5">
      <div role="tablist" className="flex h-full items-center gap-[5px] bg-[#f4f4f4] px-[3px] text-[6px] whitespace-nowrap text-[#333]">
        <button role="tab">VFO- Band- Mode</button>
        <button role="tab">RF-Filters- CW</button>
        <button role="tab">TX-CLA-Mem</button>
        <button role="tab">Macros</button>
      </div>
      <div className="flex flex-1 gap-[6px] pl-[12px] font-bold text-[#f0e028]">
        <span>RTTYU</span>
        <span>Split</span>
        <span>SWR!</span>
      </div>
      <b className="w-[26px] text-[#f0e028]">RF 3k</b>
    </div>
    <div className="flex h-[104px] gap-[3px] px-0.5">
      <div className="flex min-w-0 flex-1 gap-[2px] border-2 border-[#f4f4f4] p-[2px]">
        <Gains vfo="VFO A" levels={[0, 100, 0]} active second="Split" />
        <Gains vfo="VFO B" levels={[40, 40, 40]} second="RX" />
        <div className={clsx(panel, 'flex w-[79px] shrink-0 flex-col justify-between px-[2px] pt-[8px] pb-[2px]')}>
          <div className="grid grid-cols-3 gap-x-[3px] gap-y-[8px] text-[6px]">
            {bandKeys.map((k) => <button key={k} className={clsx(k === '20m' ? rigOn + ' text-[#a6d84a]' : rig, 'h-[12px]')}>{k}</button>)}
          </div>
          <b className="text-center leading-[8px] text-[#f0e028]">Band</b>
        </div>
        <div className={clsx(panel, 'flex min-w-0 flex-1 flex-col px-[2px] pt-[8px]')}>
          <div className="grid grid-cols-3 gap-x-[2px] gap-y-[6px] text-[6px]">
            {modeKeys.map((k) => <button key={k} className={clsx(k === 'DATA-U' ? rigOn + ' text-[#a6d84a]' : rig, 'h-[12px]')}>{k}</button>)}
            <b className="self-end text-center text-[7px] leading-[8px] text-[#f0e028]">Mode</b>
          </div>
        </div>
      </div>
      <div className="flex w-[28px] flex-col items-end justify-between border border-[#999] px-[3px] py-[4px]">
        <span className="h-[86px] w-[3px] bg-[linear-gradient(#d01038_50%,#35c048_50%)]" />
        <span className="self-start leading-[7px] text-[#c8c020]">ALC</span>
      </div>
    </div>
  </section>
);

/* ---------- Audio spectrum ---------- */

const envelope: [number, number][] = [
  [0, 7], [0.06, 13], [0.1, 7], [0.2, 8], [0.3, 8], [0.36, 12], [0.44, 14], [0.48, 32], [0.53, 14], [0.58, 10], [0.62, 17], [0.68, 9],
  [0.74, 14], [0.81, 18], [0.84, 35], [0.88, 16], [0.93, 17], [0.98, 10], [1.08, 12], [1.12, 11], [1.15, 20], [1.2, 28], [1.25, 24], [1.31, 13],
  [1.36, 24], [1.42, 28], [1.46, 12], [1.49, 10], [1.53, 20], [1.57, 12], [1.63, 34], [1.67, 15], [1.73, 11], [1.78, 19], [1.83, 13], [1.9, 10],
  [1.96, 8], [2.02, 14], [2.08, 18], [2.14, 6], [2.2, 9], [2.24, 27], [2.27, 28], [2.31, 10], [2.38, 7], [2.43, 20], [2.48, 7], [2.6, 8],
  [2.66, 3], [2.75, 5], [2.82, 1], [3, 0], [4, 0],
];

function heightAt(khz: number) {
  const i = Math.max(1, envelope.findIndex(([k]) => k >= khz));
  const [k0, h0] = envelope[i - 1];
  const [k1, h1] = envelope[i];
  return h0 + ((h1 - h0) * (khz - k0)) / (k1 - k0);
}

function buildSpectrum() {
  const rand = seeded(21);
  let fill = '';
  let peaks = '';
  for (let x = 0; x < 290; x++) {
    const h = heightAt(x / 72.5);
    const live = h > 0.8 ? h * (0.8 + rand() * 0.25) : 0;
    fill += `M${x} 46v-${live.toFixed(1)}h1V46z`;
    if (h > 0.8 || x === 218 || x === 232) peaks += `M${x} 46v-${(h + 1 + rand() * 3).toFixed(1)}h1V46z`;
  }
  return { fill, peaks };
}

// [x, top, bottom, width, brightness]
const streaks: [number, number, number, number, number][] = [
  [33, 0, 27, 5, 0.8], [45, 0, 27, 3, 0.1], [60, 0, 29, 5, 1], [84, 0, 29, 12, 0.2], [101, 0, 29, 5, 0.5], [116, 0, 27, 5, 1],
  [129, 0, 29, 4, 0], [150, 0, 29, 4, 0.1], [163, 0, 29, 5, 0.6], [174, 0, 29, 4, 0], [37, 45, 64, 5, 0.4], [60, 38, 64, 6, 1],
  [73, 38, 64, 4, 0.8], [97, 33, 64, 10, 0.5], [110, 38, 64, 13, 0.3], [129, 38, 64, 4, 0], [141, 38, 64, 4, 0], [158, 50, 64, 5, 0.1], [173, 38, 64, 4, 0],
];

function buildStreaks() {
  const rand = seeded(5);
  let bright = '';
  let mid = '';
  for (const [x0, y0, y1, w, b] of streaks) {
    for (let y = y0; y < y1; y++) {
      for (let x = x0; x < x0 + w; x++) {
        const r = rand();
        if (r < b * 0.4) bright += `M${x} ${y}h1v1h-1z`;
        else if (r < 0.1 + b * 0.6) mid += `M${x} ${y}h1v1h-1z`;
      }
    }
  }
  return { bright, mid };
}

const spectrum = buildSpectrum();
const streakPaths = buildStreaks();

const AudioSpectrum = () => (
  <section className="mt-px flex w-[311px] shrink-0 flex-col bg-[#0c0c0c] font-['Liberation_Sans',sans-serif] text-[7px] text-[#ccc]">
    <header className={clsx('flex h-[15px] items-center justify-between bg-[#191919] px-1 text-[#6a6a6a]', QT)}>
      <h2>Audio Spectrum</h2>
      <button aria-label="Close"><X size={6} /></button>
    </header>
    <div className="mx-[3px] mt-[4px] h-[152px] border border-[#3a3a3a] bg-black px-[6px]">
      <h3 className="mt-[3px] pl-1 text-center text-[9px] leading-[10px] font-bold text-white">Audio Spectrum (kHz)</h3>
      <svg viewBox="0 0 290 46" preserveAspectRatio="none" className="mt-[6px] h-[46px] w-full" shapeRendering="crispEdges">
        <path d="M0 0H290M0 3H290M0 13H290M0 24H290M0 35H290M0 45.500H290" stroke="#127a22" />
        {Array.from({ length: 21 }).map((_, i) => <line key={i} x1={i * 14.5} x2={i * 14.5} y1="0" y2="46" stroke="#0f6a1d" />)}
        <path d={spectrum.peaks} fill="#a01828" />
        <path d={spectrum.fill} fill="#909090" />
        <path d="M.500 0V46" stroke="#aaa" />
      </svg>
      <svg viewBox="0 0 290 64" preserveAspectRatio="none" className="mt-[4px] h-[64px] w-full">
        <defs>
          <linearGradient id="smear">
            <stop offset="0" stopColor="#0010c0" stopOpacity="0" />
            <stop offset=".15" stopColor="#0818d0" />
            <stop offset=".6" stopColor="#0010a0" />
            <stop offset="1" stopColor="#0010c0" stopOpacity="0" />
          </linearGradient>
        </defs>
        <rect x="20" width="165" height="64" fill="#000440" opacity=".8" />
        {streaks.map(([x, y0, y1, w, b], i) => (
          <rect key={i} x={x - 3} y={y0} width={w + 6} height={y1 - y0} fill="#0008a0" opacity={0.3 + b * 0.4} />
        ))}
        <rect x="18" y="29" width="185" height="8" fill="url(#smear)" />
        <path d={streakPaths.mid} fill="#0a3ce8" />
        <path d={streakPaths.bright} fill="#28c8ff" />
        <rect x="94" y="10" width="3" height="37" fill="#2a90e8" />
        <rect x="94" y="28" width="3" height="10" fill="#40f0ff" />
      </svg>
      <svg className="mt-[2px] h-[14px] w-full overflow-visible" fill="#ccc" fontSize="6" fontFamily="Liberation Sans">
        <line x1="0" x2="100%" y1="1.500" y2="1.500" stroke="#aaa" />
        {Array.from({ length: 21 }).map((_, i) => {
          const x = i * 5 + '%';
          return (
            <g key={i}>
              <line x1={x} x2={x} y1="1" y2="4" stroke="#aaa" />
              <text x={x} y="11" textAnchor="middle">{(i * 0.2).toFixed(2)}</text>
            </g>
          );
        })}
      </svg>
    </div>
    <div className="mx-[3px] mt-[4px] flex h-[28px] items-center gap-[14px] border border-[#3a3a3a] bg-black px-[5px]">
      <label className="flex w-[75px] flex-col items-center leading-[8px] font-bold text-white">
        <input type="range" defaultValue={25} className={hRange} />
        <Ticks className="w-[70px]" />
        Attenuation
      </label>
      <label className="flex w-[75px] flex-col items-center leading-[8px] font-bold whitespace-nowrap text-white">
        <input type="range" defaultValue={17} className={hRange} />
        <Ticks className="w-[70px]" />
        Reference Level
      </label>
      <button className={clsx(rig, 'mr-[3px] ml-auto h-[12px] w-[27px] text-[6px]')}>Settings</button>
    </div>
  </section>
);

export default function App() {
  return (
    <main className="grid min-h-screen grid-cols-[585fr_695fr] bg-black">
      <div className="min-w-0">
        <WsjtWindow />
        <div className="mt-[2px] flex h-[279px] pl-[7px]">
          <AlertTypes />
          <div className="ml-[3px] flex h-[276px]">
            <Activity />
          </div>
          <ul className={clsx('ml-[7px] flex h-[146px] w-[20px] flex-col items-end bg-[#0e0e0e] pr-1 text-[9px] leading-[12px] font-bold', UI)}>
            {bandList.map(([b, color]) => <li key={b} className={color}>{b}</li>)}
            <li className="pt-px"><Settings size={10} strokeWidth={3} className="text-[#bbb]" /></li>
          </ul>
          <p className="mt-[170px] mr-[7px] ml-auto text-center font-['DejaVu_Sans',sans-serif] text-[17px] leading-[21px] text-[#2a0004] [-webkit-text-stroke:1px_#b8202c]">
            Chat<br />not<br />monitored<br />24 x 7
          </p>
        </div>
      </div>
      <div className="min-w-0">
        <WideGraph />
        <div className="mt-[7px] flex">
          <div className="ml-0.5 min-w-0 flex-1">
            <JtAlert />
            <Callsigns />
          </div>
          <Branding />
        </div>
        <div className="mt-[4px] flex gap-[2px] pl-0.5">
          <RigControl />
          <AudioSpectrum />
        </div>
      </div>
    </main>
  );
}
